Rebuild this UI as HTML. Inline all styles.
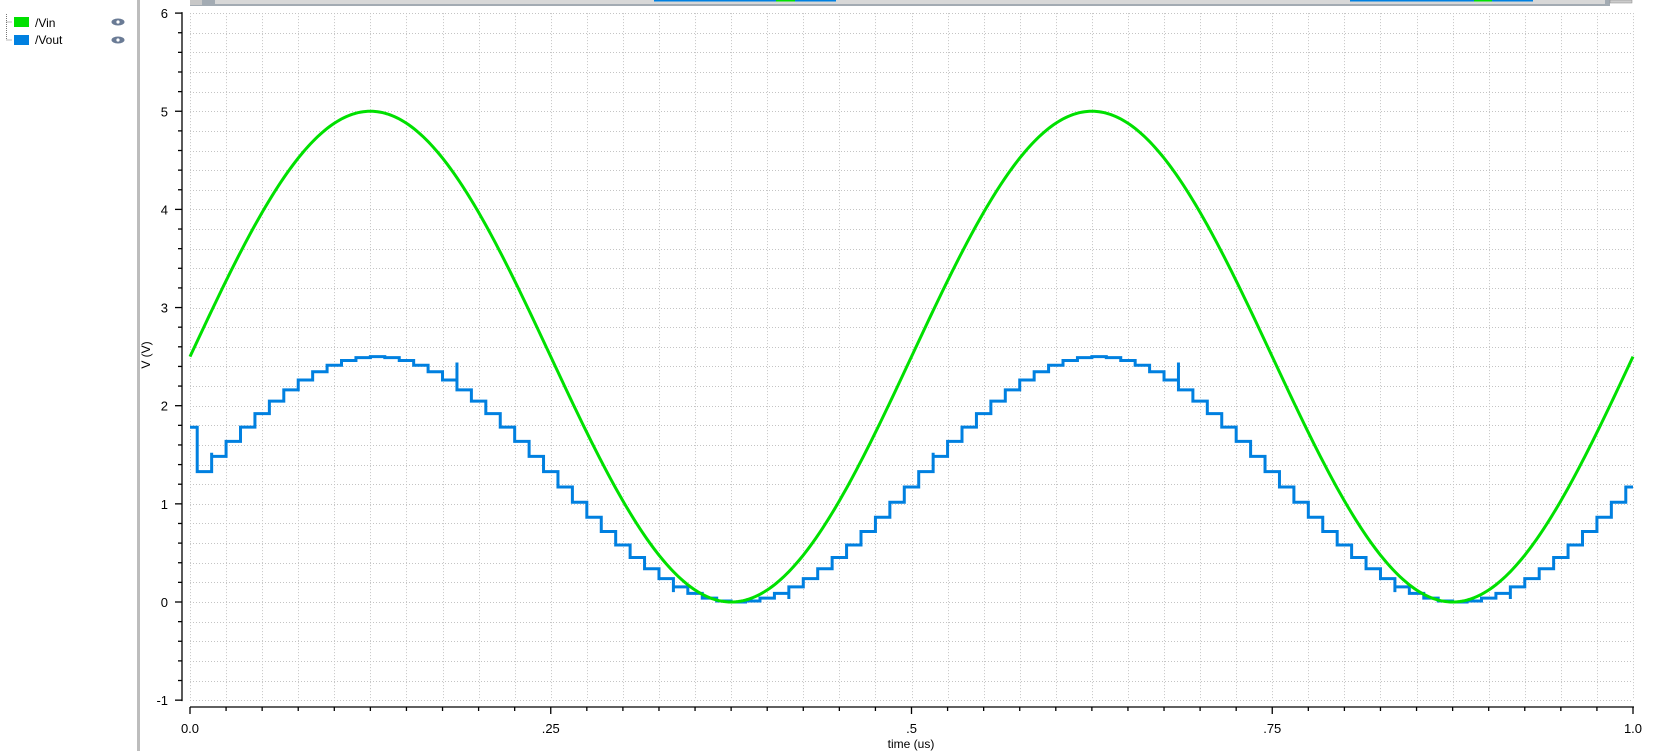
<!DOCTYPE html>
<html><head><meta charset="utf-8"><style>
html,body{margin:0;padding:0;background:#fff;width:1655px;height:751px;overflow:hidden;font-family:"Liberation Sans",sans-serif;}
</style></head><body>
<svg id="s" width="1655" height="751" viewBox="0 0 1655 751" xmlns="http://www.w3.org/2000/svg" font-family="Liberation Sans, sans-serif">
<rect width="1655" height="751" fill="#fff"/>
<rect x="137" y="0" width="3" height="751" fill="#bdbdbd"/>
<path d="M6.5 14 V40 M6.5 22 H12 M6.5 40 H12" stroke="#777" stroke-dasharray="1 1" fill="none"/>
<rect x="14" y="17" width="15" height="10" fill="#00e000"/>
<rect x="14" y="35" width="15" height="10" fill="#0080e0"/>
<text x="35" y="27" font-size="12" fill="#000">/Vin</text>
<text x="35" y="44" font-size="12" fill="#000">/Vout</text>
<g fill="#6a7b95"><ellipse cx="118" cy="22" rx="6.5" ry="3.5"/><ellipse cx="118" cy="40" rx="6.5" ry="3.5"/></g>
<g fill="#fff"><circle cx="118" cy="22" r="1.6"/><circle cx="118" cy="40" r="1.6"/></g>
<rect x="190" y="0" width="1420" height="6" fill="#a3abb3"/>
<rect x="215" y="0" width="1390" height="4" fill="#d8d8d8"/>
<rect x="190" y="0" width="12" height="5" fill="#c8c8c8"/>
<rect x="1610" y="0" width="22" height="3" fill="#ccc" stroke="#888" stroke-width="0.5"/>
<g stroke="#0080e0" stroke-width="1.5"><line x1="654" y1="0.7" x2="836" y2="0.7"/><line x1="1350" y1="0.7" x2="1533" y2="0.7"/></g>
<g stroke="#00e000" stroke-width="1.5"><line x1="776" y1="0.7" x2="795" y2="0.7"/><line x1="1474" y1="0.7" x2="1492" y2="0.7"/></g>
<g id="grid" stroke="#c4c4c4" stroke-width="1" stroke-dasharray="1 2"></g>
<g id="axes" stroke="#000" stroke-width="1.3" fill="none"></g>
<g id="lab" font-size="13" fill="#000"></g>
<text x="152" y="357" font-size="12" transform="rotate(-90 150 357)" text-anchor="middle">V (V)</text>
<text x="911" y="748" font-size="12" text-anchor="middle">time (us)</text>
<path id="vout" fill="none" stroke="#0080e0" stroke-width="3"/>
<path id="vin" fill="none" stroke="#00e000" stroke-width="3"/>
</svg>
<script>
var NS="http://www.w3.org/2000/svg";
var X0=190,X1=1633,Y0=602,K=98.15;
function X(t){return X0+(X1-X0)*t;}
function Y(v){return Y0-K*v;}
function el(p,tag,a,txt){var e=document.createElementNS(NS,tag);for(var k in a)e.setAttribute(k,a[k]);if(txt!=null)e.textContent=txt;document.getElementById(p).appendChild(e);}
for(var i=0;i<=40;i++){var x=Math.round(X(i/40))+0.5;el("grid","line",{x1:x,y1:Y(6),x2:x,y2:Y(-1)});}
for(var j=0;j<=35;j++){var v=-1+j*0.2,y=Math.round(Y(v))+0.5;el("grid","line",{x1:X0,y1:y,x2:X1,y2:y});}
el("axes","line",{x1:182,y1:Y(6)-1,x2:182,y2:Y(-1)+1});
el("axes","line",{x1:X0,y1:707,x2:X1+1,y2:707});
for(var j=0;j<=35;j++){var v=-1+j*0.2,y=Y(v),maj=(j%5==0);el("axes","line",{x1:maj?175:178,y1:y,x2:182,y2:y});}
for(var i=0;i<=40;i++){var x=X(i/40),maj=(i%10==0);el("axes","line",{x1:x,y1:707,x2:x,y2:maj?714:711});}
for(var v=-1;v<=6;v++){el("lab","text",{x:168,y:Y(v)+5,"text-anchor":"end"},String(v));}
var xl=["0.0",".25",".5",".75","1.0"];
for(var i=0;i<5;i++){el("lab","text",{x:X(i/4),y:733,"text-anchor":"middle"},xl[i]);}
var d="";for(var i=0;i<=600;i++){var t=i/600;var v=2.5+2.5*Math.sin(4*Math.PI*t);d+=(i?"L":"M")+X(t).toFixed(2)+" "+Y(v).toFixed(2);}
document.getElementById("vin").setAttribute("d",d);
function vo(t){return 1.25+1.25*Math.sin(4*Math.PI*t);}
var spikes={1:1.52,18:2.44,33:0.10,41:0.03,51:1.52,68:2.44,83:0.10,91:0.03};
var d2="M"+X(0)+" "+Y(1.78)+"L"+X(0.005)+" "+Y(1.78);
var prev=1.78;
for(var k=0;k<100;k++){var t=0.005+0.01*k;if(t>1)break;var v=vo(t);var x=X(t);
 if(spikes[k]!==undefined){d2+="L"+x+" "+Y(prev)+"L"+x+" "+Y(spikes[k])+"L"+x+" "+Y(v);}
 else d2+="L"+x+" "+Y(prev)+"L"+x+" "+Y(v);
 var te=Math.min(1,t+0.01);d2+="L"+X(te)+" "+Y(v);prev=v;}
document.getElementById("vout").setAttribute("d",d2);
</script>
</body></html>
